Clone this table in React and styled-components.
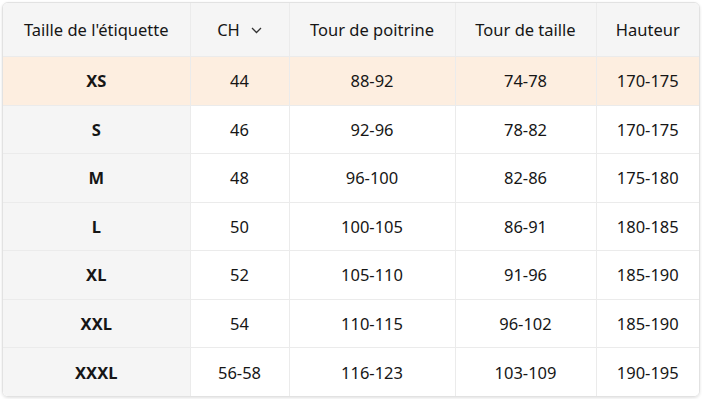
import React from "react";
import styled, { createGlobalStyle } from "styled-components";

const rows = [
  ["XS", "44", "88-92", "74-78", "170-175"],
  ["S", "46", "92-96", "78-82", "170-175"],
  ["M", "48", "96-100", "82-86", "175-180"],
  ["L", "50", "100-105", "86-91", "180-185"],
  ["XL", "52", "105-110", "91-96", "185-190"],
  ["XXL", "54", "110-115", "96-102", "185-190"],
  ["XXXL", "56-58", "116-123", "103-109", "190-195"],
];

const widths = [187, 99, 166, 141, 103];

const App = () => {
  return (
    <>
      <GlobalStyle />
      <TableCard>
        <SizeTable>
          <colgroup>
            {widths.map((w, i) => (
              <col key={i} style={{ width: w }} />
            ))}
          </colgroup>
          <thead>
            <tr>
              <HeadCell>Taille de l'étiquette</HeadCell>
              <HeadCell>
                <UnitPicker>
                  CH
                  <svg width="11" height="7" viewBox="0 0 11 7">
                    <path
                      d="M1 1l4.5 4.5L10 1"
                      fill="none"
                      stroke="#333"
                      strokeWidth="1.3"
                    />
                  </svg>
                </UnitPicker>
              </HeadCell>
              <HeadCell>Tour de poitrine</HeadCell>
              <HeadCell>Tour de taille</HeadCell>
              <HeadCell>Hauteur</HeadCell>
            </tr>
          </thead>
          <tbody>
            {rows.map((r, i) => (
              <Row key={r[0]} $active={i === 0}>
                <LabelCell>{r[0]}</LabelCell>
                {r.slice(1).map((v, j) => (
                  <Cell key={j}>{v}</Cell>
                ))}
              </Row>
            ))}
          </tbody>
        </SizeTable>
      </TableCard>
    </>
  );
};

const GlobalStyle = createGlobalStyle`
  body {
    margin: 0;
    padding: 2px;
    background: #ffffff;
    font-family: "Noto Sans", "Open Sans", sans-serif;
    color: #161616;
  }
`;

const TableCard = styled.div`
  width: 698px;
  border: 1px solid #e2e2e2;
  border-radius: 6px;
  overflow: hidden;
  box-shadow: 0 1px 3px rgba(0, 0, 0, 0.12);
  box-sizing: border-box;
`;

const SizeTable = styled.table`
  width: 100%;
  border-collapse: collapse;
  table-layout: fixed;
  font-size: 16.5px;

  td,
  th {
    border-right: 1px solid #ebebeb;
    border-bottom: 1px solid #ebebeb;
    text-align: center;
    padding: 0;
  }

  td:last-child,
  th:last-child {
    border-right: none;
  }

  tbody tr:last-child td {
    border-bottom: none;
  }
`;

const HeadCell = styled.th`
  height: 53px;
  background: #f5f5f5;
  font-weight: 400;
`;

const UnitPicker = styled.span`
  display: inline-flex;
  align-items: center;
  gap: 11px;

  svg {
    margin-top: 2px;
  }
`;

const Row = styled.tr`
  height: 48.5px;
  background: ${(p) => (p.$active ? "#fdeee0" : "#ffffff")};

  td:first-child {
    background: ${(p) => (p.$active ? "#fdeee0" : "#f5f5f5")};
  }
`;

const LabelCell = styled.td`
  font-weight: 700;
`;

const Cell = styled.td`
  font-weight: 400;
`;

export default App;
